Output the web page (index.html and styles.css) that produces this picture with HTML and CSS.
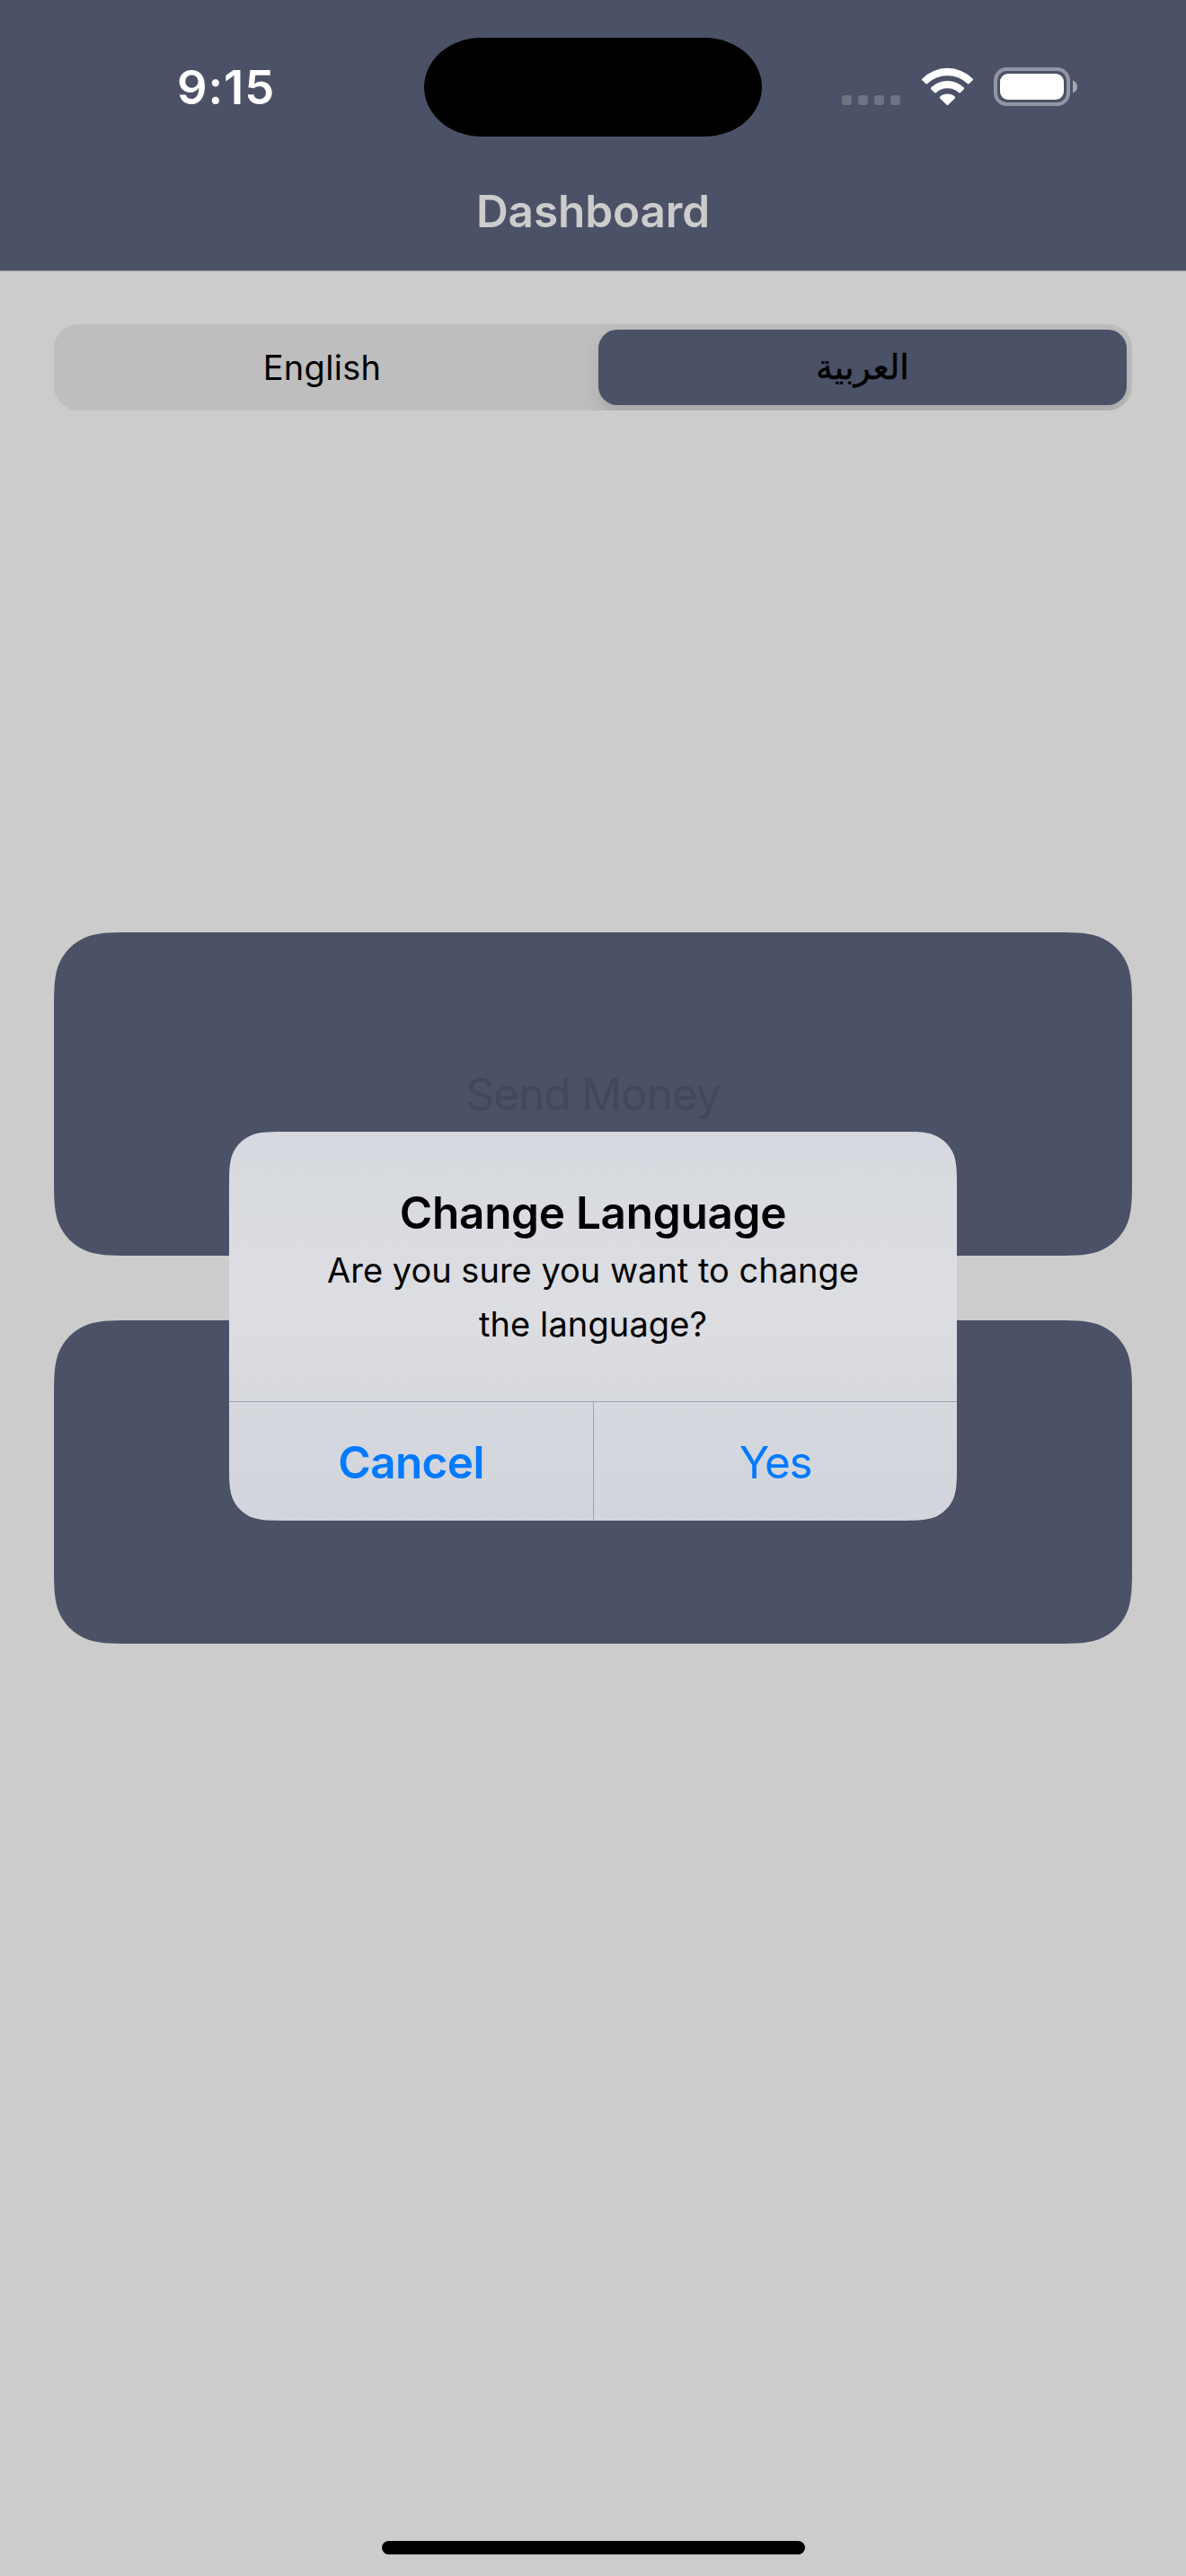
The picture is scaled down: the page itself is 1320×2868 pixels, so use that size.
FILE: index.html
```html
<!DOCTYPE html>
<html lang="en">
<head>
<meta charset="utf-8">
<title>Dashboard</title>
<link rel="stylesheet" href="styles.css">
</head>
<body>
<div class="screen">
  <header class="header">
    <div class="status">
      <div class="clock">9:15</div>
      <div class="island"></div>
      <div class="indicators">
        <svg class="dots" width="65" height="11" viewBox="0 0 65 11"><g fill="#6f7485"><rect width="11" height="11" rx="3.6"/><rect x="18" width="11" height="11" rx="3.6"/><rect x="36" width="11" height="11" rx="3.6"/><rect x="54" width="11" height="11" rx="3.6"/></g></svg>
        <svg class="wifi" width="59" height="43" viewBox="0 0 59 43"><g fill="#fff"><path d="M1.3 14.2Q.6 13.3 1.3 12.7A39.5 39.5 0 0 1 57.7 12.7Q58.4 13.3 57.7 14.2L53.6 18.2Q52.8 18.8 52 18.2A32.5 32.5 0 0 0 7 18.2Q6.2 18.8 5.4 18.2Z"/><path d="M11.1 24.2Q10.4 23.3 11.1 22.6A26.2 26.2 0 0 1 47.9 22.6Q48.6 23.3 47.9 24.2L43.7 28.3Q43 28.9 42.2 28.3A18.8 18.8 0 0 0 16.8 28.3Q16 28.9 15.3 28.3Z"/><path d="M21 34.3Q20.3 33.4 21.1 32.7A12.6 12.6 0 0 1 37.9 32.7Q38.7 33.4 38 34.3L30.3 41.8Q29.5 42.5 28.7 41.8Z"/></g></svg>
        <svg class="battery" width="94" height="43" viewBox="0 0 94 43"><rect x="2" y="2" width="81" height="39" rx="12.5" fill="none" stroke="#9396a4" stroke-width="4"/><rect x="7" y="7" width="71" height="29" rx="9" fill="#fff"/><path d="M88 14.5Q93 16.5 93 21.5Q93 26.5 88 28.5Z" fill="#a5a8b3"/></svg>
      </div>
    </div>
    <h1 class="title">Dashboard</h1>
  </header>

  <main class="content">
    <div class="segmented">
      <button class="segment">English</button>
      <button class="segment segment-selected" lang="ar" dir="rtl">العربية</button>
    </div>
    <div class="actions">
      <button class="card">Send Money</button>
      <button class="card" aria-label="Action"></button>
    </div>
  </main>

  <div class="home"></div>

  <div class="alert" role="alertdialog">
    <div class="alert-body">
      <h2 class="alert-title">Change Language</h2>
      <p class="alert-text">Are you sure you want to change<br><span class="last-line">the language?</span></p>
    </div>
    <div class="alert-buttons">
      <button class="alert-button cancel">Cancel</button>
      <button class="alert-button yes">Yes</button>
    </div>
  </div>
</div>
</body>
</html>
```
FILE: styles.css
```css
* {
  box-sizing: border-box;
  margin: 0;
  padding: 0;
}

body {
  background: #ccc;
  font-family: Inter, "Liberation Sans", sans-serif;
}

button {
  border: 0;
  background: none;
  font: inherit;
  color: inherit;
}

.screen {
  position: relative;
  display: flex;
  flex-direction: column;
  width: 1320px;
  height: 2868px;
  background: #ccc;
}

.header {
  height: 302px;
  padding-top: 42px;
  background: #4b5166;
  border-bottom: 1px solid #8d8d96;
}

.status {
  display: grid;
  grid-template-columns: 472px 376px 472px;
  grid-template-rows: 110px;
  height: 110px;
}

.clock {
  padding-left: 197px;
  font-size: 52.5px;
  font-weight: 600;
  line-height: 111px;
  letter-spacing: 0.9px;
  color: #fff;
}

.island {
  border-radius: 64px / 55px;
  background: #000;
}

.indicators {
  display: flex;
  align-items: flex-start;
  padding: 33px 0 0 465px;
  margin-left: -376px;
}

.dots {
  margin: 31px 23px 0 0;
}

.wifi {
  margin-right: 22px;
}

.title {
  padding-top: 17px;
  font-size: 49.5px;
  font-weight: 600;
  line-height: 132px;
  letter-spacing: -0.1px;
  text-align: center;
  color: #ccc;
}

.content {
  padding: 59px 60px 0;
}

.segmented {
  display: grid;
  grid-template-columns: 600px 588px;
  gap: 6px;
  height: 96px;
  padding: 6px 6px 6px 0;
  border-radius: 27px;
  background: #bebebe;
  overflow: hidden;
}

.segment {
  padding-right: 3px;
  font-size: 38px;
  line-height: 84px;
  letter-spacing: 0.3px;
  color: #000;
}

.segment-selected {
  padding-right: 0;
  border-radius: 21px;
  background: #4b5166;
  box-shadow: 0 9px 24px rgba(0, 0, 0, 0.09), 0 9px 3px rgba(0, 0, 0, 0.03);
  font-family: "DejaVu Sans", sans-serif;
  letter-spacing: 0;
  -webkit-text-stroke: 0.5px #000;
}

.actions {
  display: grid;
  gap: 72px;
  padding-top: 581px;
}

/* Continuous-curvature corners, 60px radius */
.card {
  height: 360px;
  background: #4b5166;
  font-size: 49.5px;
  letter-spacing: -1.04px;
  color: #444758;
  clip-path: path("M91.72 0H1108.28C1134.69 0 1147.9 0 1162.11 4.49C1177.63 10.14 1189.86 22.37 1195.51 37.89C1200 52.1 1200 65.31 1200 91.72V268.28C1200 294.69 1200 307.9 1195.51 322.11C1189.86 337.63 1177.63 349.86 1162.11 355.51C1147.9 360 1134.69 360 1108.28 360H91.72C65.31 360 52.1 360 37.89 355.51C22.37 349.86 10.14 337.63 4.49 322.11C0 307.9 0 294.69 0 268.28V91.72C0 65.31 0 52.1 4.49 37.89C10.14 22.37 22.37 10.14 37.89 4.49C52.1 0 65.31 0 91.72 0Z");
}

.home {
  width: 471px;
  height: 15px;
  margin: auto auto 24px 425px;
  border-radius: 8px;
  background: #000;
}

/* Modal over the dimmed screen, 42px continuous corners */
.alert {
  position: absolute;
  left: 255px;
  top: 1260px;
  width: 810px;
  height: 433px;
  background: linear-gradient(#d6d9df 0%, #dadce1 25%, #dcdee2 45%, #d8dadf 65%, #d4d7dd 75%, #d2d5dc 100%);
  text-align: center;
  clip-path: path("M64.2 0H745.8C764.28 0 773.53 0 783.48 3.15C794.34 7.1 802.9 15.66 806.85 26.52C810 36.47 810 45.72 810 64.2V368.8C810 387.28 810 396.53 806.85 406.48C802.9 417.34 794.34 425.9 783.48 429.85C773.53 433 764.28 433 745.8 433H64.2C45.72 433 36.47 433 26.52 429.85C15.66 425.9 7.1 417.34 3.15 406.48C0 396.53 0 387.28 0 368.8V64.2C0 45.72 0 36.47 3.15 26.52C7.1 15.66 15.66 7.1 26.52 3.15C36.47 0 45.72 0 64.2 0Z");
}

.alert-body {
  height: 300px;
  padding-top: 60px;
  color: #000;
}

.alert-title {
  font-size: 49.5px;
  font-weight: 600;
  line-height: 60px;
  letter-spacing: -0.3px;
}

.alert-text {
  margin-top: 4px;
  font-size: 38px;
  line-height: 60px;
}

.last-line {
  letter-spacing: 0.1px;
}

.alert-buttons {
  display: grid;
  grid-template-columns: 405px 405px;
  height: 133px;
  border-top: 1px solid #9fa2b0;
}

.alert-button {
  padding-top: 2px;
  font-size: 49.5px;
  color: #007aff;
}

.cancel {
  font-weight: 600;
  letter-spacing: -0.64px;
}

.yes {
  border-left: 1px solid #9fa2b0;
  letter-spacing: -1.4px;
}
```
